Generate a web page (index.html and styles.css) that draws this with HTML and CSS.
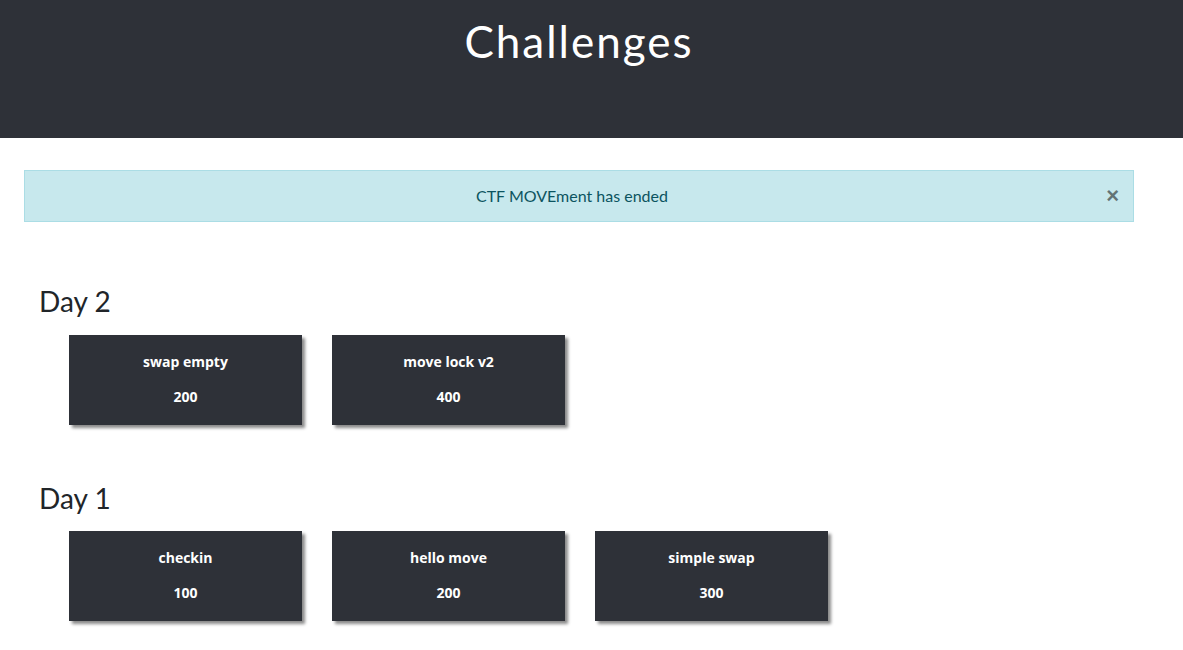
FILE: index.html
```html
<!DOCTYPE html>
<html lang="en">
<head>
<meta charset="utf-8">
<title>Challenges</title>
<link rel="stylesheet" href="styles.css">
</head>
<body>
<header class="jumbotron">
  <h1 class="page-title">Challenges</h1>
</header>
<main class="container">
  <div class="alert">
    <span class="alert-text">CTF MOVEment has ended</span>
    <button class="alert-close" type="button">×</button>
  </div>
  <section class="category first">
    <h3 class="category-title">Day 2</h3>
    <div class="cards">
      <button class="chal" type="button"><span class="chal-name">swap empty</span><span class="chal-value">200</span></button>
      <button class="chal" type="button"><span class="chal-name">move lock v2</span><span class="chal-value">400</span></button>
    </div>
  </section>
  <section class="category">
    <h3 class="category-title">Day 1</h3>
    <div class="cards">
      <button class="chal" type="button"><span class="chal-name">checkin</span><span class="chal-value">100</span></button>
      <button class="chal" type="button"><span class="chal-name">hello move</span><span class="chal-value">200</span></button>
      <button class="chal" type="button"><span class="chal-name">simple swap</span><span class="chal-value">300</span></button>
    </div>
  </section>
</main>
</body>
</html>
```

FILE: styles.css
```css
* { box-sizing: border-box; }
html, body { margin: 0; padding: 0; }
body {
  background: #ffffff;
  font-family: "Lato", "Liberation Sans", sans-serif;
  color: #212529;
}
.jumbotron {
  background: #2e3138;
  height: 138px;
  display: flex;
  justify-content: center;
  padding: 15px 49px 0 24px;
}
.page-title {
  margin: 0;
  color: #ffffff;
  font-family: "Lato", sans-serif;
  font-weight: 400;
  font-size: 44px;
  line-height: 52px;
  letter-spacing: 2px;
  height: 52px;
}
.container {
  padding: 32px 49px 40px 24px;
}
.alert {
  position: relative;
  height: 52px;
  background: #c7e8ed;
  border: 1px solid #abdde5;
  display: flex;
  align-items: center;
  justify-content: center;
  padding-right: 14px;
}
.alert-text {
  color: #0c5460;
  font-size: 16px;
  line-height: 20px;
  font-family: "Lato", sans-serif;
}
.alert-close {
  position: absolute;
  right: 14px;
  top: 13px;
  background: none;
  border: 0;
  padding: 0;
  font-family: "Liberation Sans", sans-serif;
  font-weight: 700;
  font-size: 22px;
  line-height: 24px;
  color: #000;
  opacity: .5;
  cursor: pointer;
}
.category { margin-top: 57px; padding-left: 15px; }
.category.first { margin-top: 63px; }
.category-title {
  margin: 0 0 16px;
  font-family: "Lato", sans-serif;
  font-weight: 400;
  font-size: 28px;
  line-height: 33.6px;
  color: #212529;
}
.cards {
  display: flex;
  gap: 30px;
  padding-left: 30px;
}
.chal {
  width: 233px;
  height: 90px;
  background: #2e3138;
  border: 0;
  padding: 17px 0 0;
  color: #ffffff;
  display: flex;
  flex-direction: column;
  align-items: center;
  box-shadow: 3px 3px 3px #8a8a8a;
  font-family: "Open Sans", sans-serif;
  font-weight: 700;
  font-size: 14px;
  cursor: pointer;
}
.chal-name { line-height: 20px; height: 20px; }
.chal-value { line-height: 20px; margin-top: 15px; }
```
